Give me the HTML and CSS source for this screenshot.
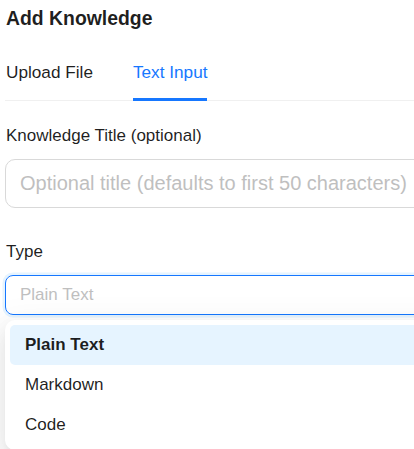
FILE: index.html
```html
<!DOCTYPE html>
<html>
<head>
<meta charset="utf-8">
<link rel="stylesheet" href="styles.css">
</head>
<body>
<div class="modal">
  <div class="modal-title">Add Knowledge</div>
  <div class="tabs">
    <div class="tab">Upload File</div>
    <div class="tab active">Text Input</div>
  </div>
  <div class="form">
    <div class="form-item">
      <div class="label">Knowledge Title (optional)</div>
      <div class="input">Optional title (defaults to first 50 characters)</div>
    </div>
    <div class="form-item">
      <div class="label">Type</div>
      <div class="select-wrap">
        <div class="select">Plain Text</div>
        <div class="dropdown">
          <div class="option selected">Plain Text</div>
          <div class="option">Markdown</div>
          <div class="option">Code</div>
        </div>
      </div>
    </div>
  </div>
</div>
</body>
</html>
```
FILE: styles.css
```css
html {
  overflow: hidden;
  background: #ffffff;
}
body {
  margin: 0;
  padding: 0;
  min-height: 449px;
  font-family: "Liberation Sans", Arial, sans-serif;
  color: rgba(0, 0, 0, 0.88);
}
.modal {
  width: 560px;
  padding: 4px 0 0 5px;
}
.modal-title {
  font-size: 19.4px;
  font-weight: 700;
  line-height: 28px;
  margin-bottom: 14px;
  padding-left: 1px;
}
.tabs {
  display: flex;
  gap: 40px;
  border-bottom: 1px solid #f0f0f0;
}
.tab {
  position: relative;
  font-size: 17.2px;
  line-height: 26px;
  padding: 13px 0 15px;
  padding-left: 1px;
}
.tab.active {
  color: #1677ff;
  padding-left: 0;
}
.tab.active::after {
  content: "";
  position: absolute;
  left: 0;
  right: 0;
  bottom: -1px;
  height: 3px;
  background: #1677ff;
}
.form {
  padding-top: 22px;
}
.form-item {
  margin-bottom: 31px;
}
.label {
  font-size: 17px;
  line-height: 26px;
  padding-bottom: 10px;
  padding-left: 1px;
}
.input {
  height: 47px;
  border: 1px solid #d9d9d9;
  border-radius: 10px;
  padding: 0 14px;
  font-size: 20px;
  line-height: 47px;
  color: #bfbfbf;
  white-space: nowrap;
}
.select-wrap {
  position: relative;
}
.select {
  height: 38px;
  border: 1px solid #1677ff;
  border-radius: 8px;
  box-shadow: 0 0 0 2.5px rgba(5, 145, 255, 0.1);
  padding: 0 14px;
  font-size: 17px;
  line-height: 38px;
  color: #bfbfbf;
}
.dropdown {
  position: absolute;
  top: 45px;
  left: 0;
  right: 0;
  background: #ffffff;
  border-radius: 10px;
  padding: 5px;
  box-shadow: 0 7px 20px 0 rgba(0, 0, 0, 0.08), 0 4px 7px -5px rgba(0, 0, 0, 0.12), 0 11px 35px 10px rgba(0, 0, 0, 0.05);
}
.option {
  height: 40px;
  line-height: 40px;
  padding: 0 15px;
  font-size: 17px;
  border-radius: 5px;
  color: rgba(0, 0, 0, 0.88);
}
.option.selected {
  background: #e6f4ff;
  font-weight: 700;
}
```
